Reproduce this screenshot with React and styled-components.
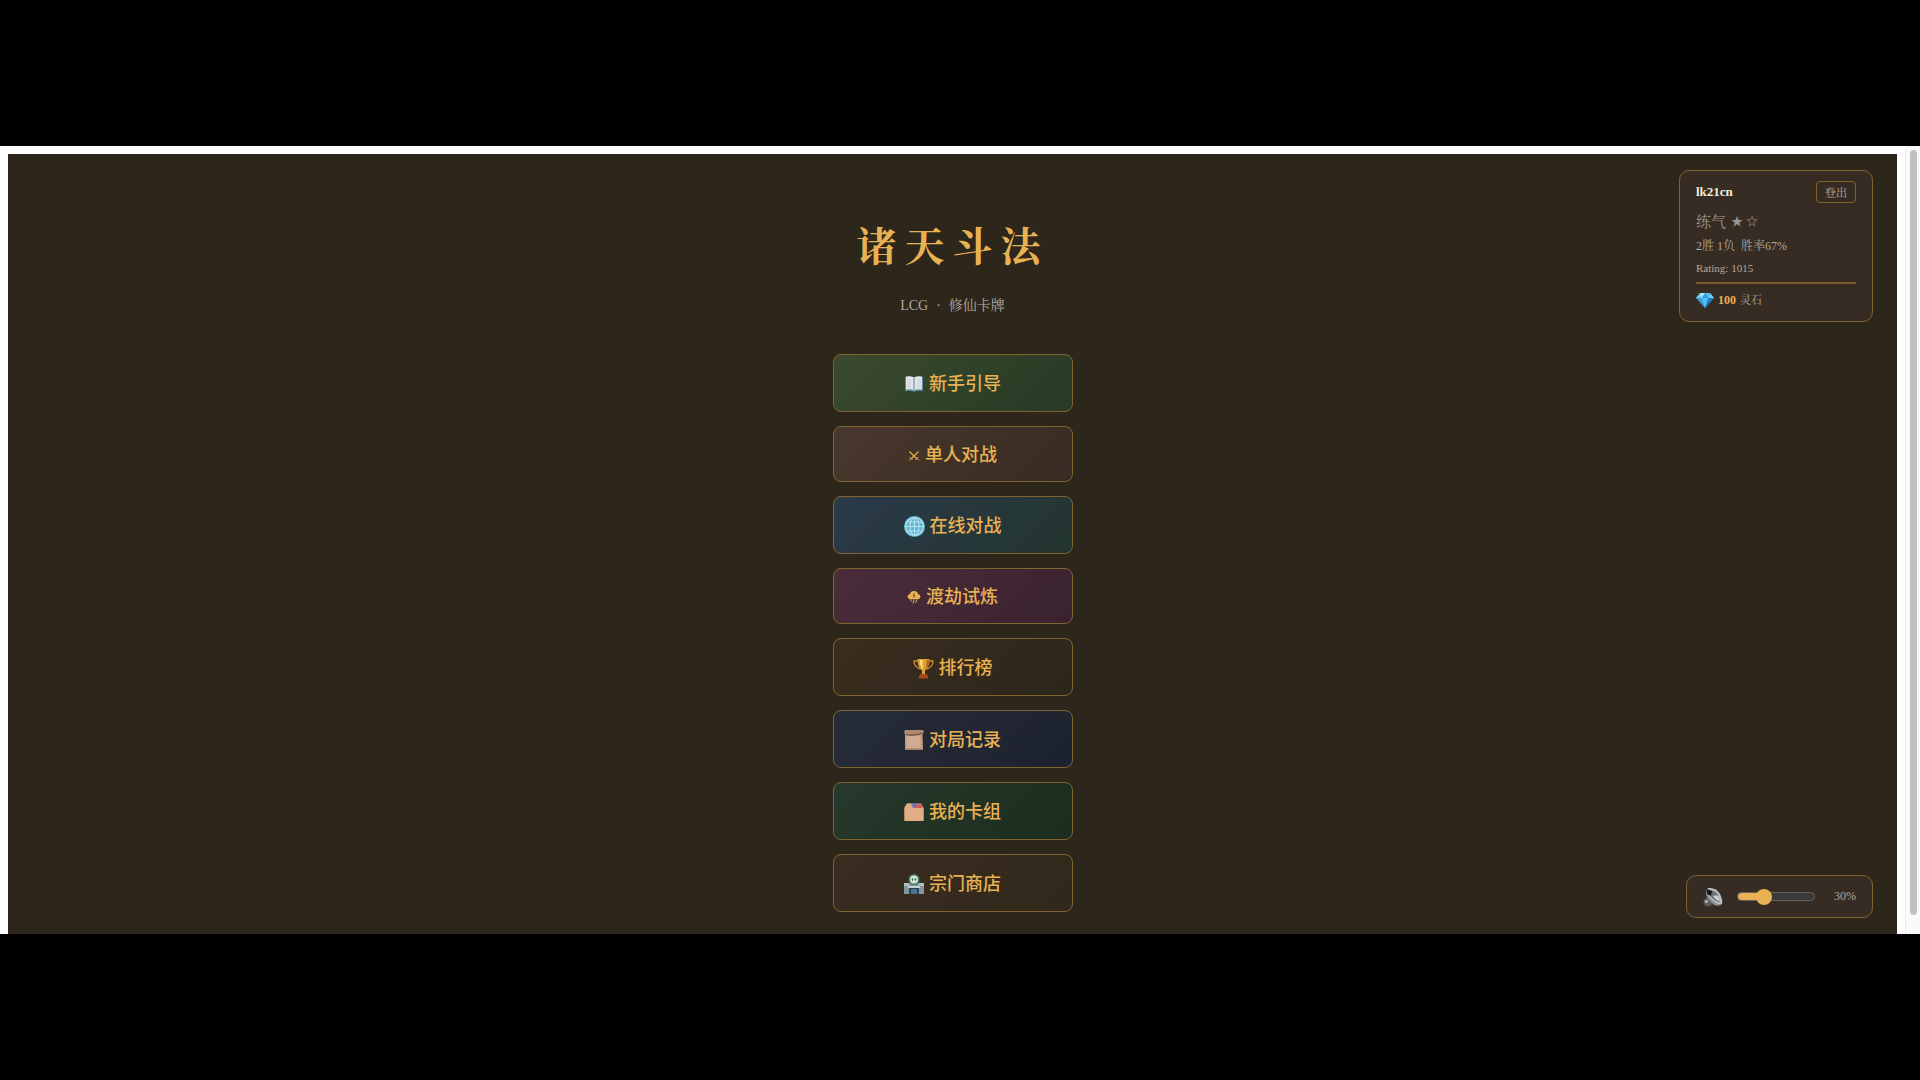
import React, { useState } from "react";
import styled, { createGlobalStyle } from "styled-components";

const gold = "#e8b252";
const line = "#80642f";
const muted = "#b3a899";
const serif = `"Liberation Serif", "Noto Serif CJK SC", "Noto Sans CJK SC", serif`;
const sans = `"Liberation Sans", "Noto Sans CJK SC", sans-serif`;

const GlobalStyle = createGlobalStyle`
  * {
    box-sizing: border-box;
  }

  body {
    margin: 0;
    background: #000;
    font-family: ${serif};
  }
`;

const Screen = styled.div`
  display: flex;
  min-height: 100vh;
  padding: 146px 0;
  background: #000;
`;

const Window = styled.div`
  flex: 1;
  display: flex;
  background: #fff;
`;

const Page = styled.main`
  position: relative;
  flex: 1;
  margin: 8px 8px 0;
  padding: 70px 0 20px;
  background: #2d261b;
  display: flex;
  flex-direction: column;
  align-items: center;
`;

const Scrollbar = styled.div`
  display: flex;
  width: 15px;
  padding: 4px 3px 19px 4px;
  background: #fafafa;
  border-left: 1px solid #ececec;
`;

const ScrollThumb = styled.div`
  flex: 1;
  border-radius: 4px;
  background: #c1c1c1;
`;

const Title = styled.h1`
  margin: 0;
  color: ${gold};
  font-size: 40px;
  font-weight: 700;
  line-height: 48px;
  letter-spacing: 8px;
`;

const Subtitle = styled.p`
  display: flex;
  gap: 8px;
  margin: 24px 0 39px;
  color: ${muted};
  font-size: 14px;
  line-height: 19px;
`;

const Menu = styled.nav`
  display: flex;
  flex-direction: column;
  gap: 14px;
`;

const MenuButton = styled.button`
  display: flex;
  align-items: center;
  justify-content: center;
  gap: 5px;
  width: 240px;
  padding: 16px 16px 14px;
  border: 1px solid ${line};
  border-radius: 8px;
  background: linear-gradient(135deg, ${(p) => p.$from}, ${(p) => p.$to});
  color: ${gold};
  font-family: ${sans};
  font-size: 18px;
  font-weight: 500;
  line-height: ${(p) => (p.$compact ? 24 : 26)}px;
  cursor: pointer;
`;

const Icon = styled.svg`
  flex: none;
  width: ${(p) => p.$size || 20}px;
  height: ${(p) => p.$size || 20}px;
`;

const PlayerCard = styled.section`
  position: absolute;
  top: 16px;
  right: 24px;
  width: 194px;
  padding: 10px 16px;
  border: 1px solid ${line};
  border-radius: 10px;
  background: #372c23;
  color: ${muted};
`;

const CardHeader = styled.div`
  display: flex;
  align-items: center;
  justify-content: space-between;
  margin-bottom: 8px;
`;

const PlayerName = styled.strong`
  color: #f3eadb;
  font-size: 13px;
`;

const LogoutButton = styled.button`
  width: 40px;
  height: 22px;
  padding: 0;
  border: 1px solid ${line};
  border-radius: 4px;
  background: transparent;
  color: #c2b6a6;
  font-family: ${serif};
  font-size: 11px;
  cursor: pointer;
`;

const Rank = styled.div`
  display: flex;
  align-items: center;
  color: #9f968c;
  font-size: 15px;
  line-height: 22px;
`;

const Stars = styled.span`
  display: flex;
  gap: 3px;
  margin-left: 5px;
  font-size: 12px;
`;

const Stats = styled.div`
  margin-top: 4px;
  font-size: 12px;
  line-height: 18px;
  white-space: pre;
`;

const Rating = styled.div`
  margin-top: 4px;
  font-size: 11px;
  line-height: 18px;
`;

const Wallet = styled.div`
  display: flex;
  align-items: center;
  gap: 4px;
  margin-top: 5px;
  padding-top: 5px;
  border-top: 2px solid #765b2e;
  font-size: 11px;
  line-height: 22px;
`;

const Amount = styled.strong`
  color: ${gold};
  font-size: 12px;
`;

const VolumePanel = styled.div`
  position: absolute;
  right: 24px;
  bottom: 16px;
  display: flex;
  align-items: center;
  width: 187px;
  height: 43px;
  padding: 0 16px;
  border: 1px solid ${line};
  border-radius: 10px;
  background: #372c23;
`;

const MuteButton = styled.button`
  display: flex;
  padding: 0;
  border: 0;
  background: none;
  cursor: pointer;
`;

const VolumeSlider = styled.input`
  appearance: none;
  width: 78px;
  height: 9px;
  margin: 0 0 0 14px;
  border: 1px solid #66605c;
  border-radius: 5px;
  background: linear-gradient(${gold}, ${gold}) 0 0 / ${(p) => p.value}% 100%
    no-repeat #3a3a3b;

  &::-webkit-slider-thumb {
    appearance: none;
    width: 16px;
    height: 16px;
    border-radius: 50%;
    background: ${gold};
  }
`;

const VolumeValue = styled.output`
  flex: 1;
  color: ${muted};
  font-size: 12px;
  text-align: right;
`;

const BookIcon = () => (
  <Icon viewBox="0 0 20 20" aria-hidden="true">
    <path d="M1 3h18v14h-7l-2 1-2-1H1z" fill="#5c86a0" />
    <path d="M2 2.5q5-1 8 1 3-2 8-1v13q-5-1-8 1-3-2-8-1z" fill="#e1e5ea" />
    <path d="M10 3.5v13" stroke="#7c8d9c" strokeWidth="1.2" />
    <path d="M4 5v9M6 5v9M14 5v9M16 5v9" stroke="#c3cbd4" strokeWidth="0.8" />
  </Icon>
);

const SwordsIcon = () => (
  <Icon $size={12} viewBox="0 0 12 12" fill="none" stroke={gold} aria-hidden="true">
    <path d="M1.5 2.5l7 7M10.5 2.5l-7 7" strokeWidth="1.2" />
    <path d="M1.5 8l3 3M10.5 8l-3 3M3 9.5l-2 2M9 9.5l2 2" strokeWidth="1" />
  </Icon>
);

const GlobeIcon = () => (
  <Icon $size={21} viewBox="0 0 21 21" fill="none" aria-hidden="true">
    <circle cx="10.5" cy="10.5" r="10.5" fill="#62b4d3" />
    <g stroke="#b5e4ef" strokeWidth="1.1">
      <circle cx="10.5" cy="10.5" r="9" />
      <ellipse cx="10.5" cy="10.5" rx="4.5" ry="9" />
      <path d="M10.5 1.5v18M1.5 10.5h18M3 6h15M3 15h15" />
    </g>
  </Icon>
);

const StormIcon = () => (
  <Icon $size={14} viewBox="0 0 14 14" aria-hidden="true">
    <path
      d="M2.5 9Q.5 8.5 .5 6.5T3 4q.5-3 4-3t4 3q2.5 .5 2.5 2.5T11.5 9z"
      fill={gold}
    />
    <path d="M7.5 3L6 5.5h2L6.5 8" fill="none" stroke="#8a4d35" strokeWidth="0.9" />
    <path d="M4 9v2.5M7 9l-1 4.5M10 9l-1.5 4" fill="none" stroke={gold} strokeWidth="1" />
  </Icon>
);

const TrophyIcon = () => (
  <Icon $size={21} viewBox="0 0 21 21" aria-hidden="true">
    <path
      d="M5 3H1q0 6 6.5 8M16 3h4q0 6-6.5 8"
      fill="none"
      stroke="#c98a2c"
      strokeWidth="1.4"
    />
    <path d="M4.5 1h12q0 9-4.5 11.5v3.5h-3v-3.5Q4.5 10 4.5 1z" fill="#e0a034" />
    <path d="M7 2h2.5q-.5 6 .5 9.5Q7 9 7 2z" fill="#ffe28a" />
    <path d="M14 2h2q-.5 7-3.5 9.5Q14 8 14 2z" fill="#a85f1b" />
    <path d="M7 16h7l1.5 4.5h-10z" fill="#a44b21" />
  </Icon>
);

const ScrollIcon = () => (
  <Icon viewBox="0 0 20 20" aria-hidden="true">
    <path d="M1 3h17.5l.5 17H1z" fill="#c49a7e" />
    <path d="M2.5 6h14v12h-14z" fill="#d0ab91" />
    <path d="M.5 0h19v3.5Q10 5 .5 4z" fill="#b08a70" />
    <path d="M2 4.5q7 1.5 16-1" fill="none" stroke="#5a453b" strokeWidth="1.2" />
    <path d="M1 18.5h18V20H1z" fill="#a88069" />
  </Icon>
);

const CardBoxIcon = () => (
  <Icon viewBox="0 0 20 20" aria-hidden="true">
    <path d="M3 1.5h14l2.5 4V19H.5V6z" fill="#d2966e" />
    <path d="M7 1.5h6v5H7z" fill="#627bc0" />
    <path d="M12 2.5h6v4h-6z" fill="#d75755" />
    <path d="M.5 5.5L3 1.5h4l2 4.5h10.5v13H.5z" fill="#e2ad83" />
  </Icon>
);

const ShopIcon = () => (
  <Icon viewBox="0 0 20 20" aria-hidden="true">
    <path d="M0 9h20v11H0z" fill="#8298a0" />
    <path d="M0 9h5v3H0zM15 9h5v3h-5z" fill="#b2c1c4" />
    <path d="M5 13h10v7H5z" fill="#294455" />
    <path d="M4 12h12v2H4z" fill="#c5d0d1" />
    <path d="M7 15h6v5H7z" fill="#4f7189" />
    <circle cx="10" cy="5.5" r="5.5" fill="#477a62" />
    <circle cx="10" cy="5.5" r="4" fill="#d8e6d8" />
    <path d="M7.5 5.5h2M10.5 5.5h2M8.5 4v3M11.5 4v3" stroke="#42775f" strokeWidth="0.9" />
  </Icon>
);

const GemIcon = () => (
  <Icon $size={18} viewBox="0 0 18 18" aria-hidden="true">
    <path d="M4 2h10l4 5-9 10L0 7z" fill="#31a0e2" />
    <path d="M4 2l1.5 5H0zM14 2l4 5h-5.5z" fill="#78cbef" />
    <path d="M4 2h5L5.5 7z" fill="#b7e8f9" />
    <path d="M9 2h5l-1.5 5z" fill="#53b9ed" />
    <path d="M5.5 7h7L9 17z" fill="#56bff0" />
    <path d="M12.5 7H18L9 17z" fill="#1c78bd" />
  </Icon>
);

const SpeakerIcon = () => (
  <Icon viewBox="0 0 20 20" aria-hidden="true">
    <circle cx="5" cy="15" r="4.5" fill="#555a5e" />
    <circle cx="3.5" cy="14.5" r="1.8" fill="#a7abad" />
    <path d="M5 1Q1 6 5 12l6 6q5 2 8-1z" fill="#899094" />
    <path d="M5 1q8-1 12 6 3 6 2 10-6 1-11-5Q3 6 5 1z" fill="#b8bec1" />
    <path d="M6 3q6 0 9 5 2 4 2 7-4 0-8-4-4-4-3-8z" fill="#697176" />
    <path d="M4 2l5 2-1 5-4-2z" fill="#17191b" />
    <path d="M10 9q4-2 6 1l1 4q-4 0-7-5z" fill="#c9ced0" />
  </Icon>
);

const menuItems = [
  { label: "新手引导", icon: BookIcon, from: "#394a2f", to: "#293a25" },
  { label: "单人对战", icon: SwordsIcon, from: "#49382d", to: "#382b23", compact: true },
  { label: "在线对战", icon: GlobeIcon, from: "#2b3a4a", to: "#23352f" },
  { label: "渡劫试炼", icon: StormIcon, from: "#4b2d3a", to: "#3a2230", compact: true },
  { label: "排行榜", icon: TrophyIcon, from: "#3a2d1f", to: "#2c261a" },
  { label: "对局记录", icon: ScrollIcon, from: "#272c39", to: "#1c222d" },
  { label: "我的卡组", icon: CardBoxIcon, from: "#27392c", to: "#1c2c1f" },
  { label: "宗门商店", icon: ShopIcon, from: "#3a2c20", to: "#30281a" },
];

const App = () => {
  const [volume, setVolume] = useState(30);

  return (
    <>
      <GlobalStyle />
      <Screen>
        <Window>
          <Page>
            <Title>诸天斗法</Title>
            <Subtitle>
              <span>LCG</span>
              <span>·</span>
              <span>修仙卡牌</span>
            </Subtitle>

            <Menu>
              {menuItems.map(({ label, icon: ItemIcon, from, to, compact }) => (
                <MenuButton key={label} type="button" $from={from} $to={to} $compact={compact}>
                  <ItemIcon />
                  {label}
                </MenuButton>
              ))}
            </Menu>

            <PlayerCard>
              <CardHeader>
                <PlayerName>lk21cn</PlayerName>
                <LogoutButton type="button">登出</LogoutButton>
              </CardHeader>
              <Rank>
                <span>练气</span>
                <Stars>
                  <span>★</span>
                  <span>☆</span>
                </Stars>
              </Rank>
              <Stats>{"2胜 1负  胜率67%"}</Stats>
              <Rating>Rating: 1015</Rating>
              <Wallet>
                <GemIcon />
                <Amount>100</Amount>
                <span>灵石</span>
              </Wallet>
            </PlayerCard>

            <VolumePanel>
              <MuteButton type="button" aria-label="静音">
                <SpeakerIcon />
              </MuteButton>
              <VolumeSlider
                type="range"
                min="0"
                max="100"
                aria-label="音量"
                value={volume}
                onChange={(e) => setVolume(Number(e.target.value))}
              />
              <VolumeValue>{volume}%</VolumeValue>
            </VolumePanel>
          </Page>
          <Scrollbar>
            <ScrollThumb />
          </Scrollbar>
        </Window>
      </Screen>
    </>
  );
};

export default App;
